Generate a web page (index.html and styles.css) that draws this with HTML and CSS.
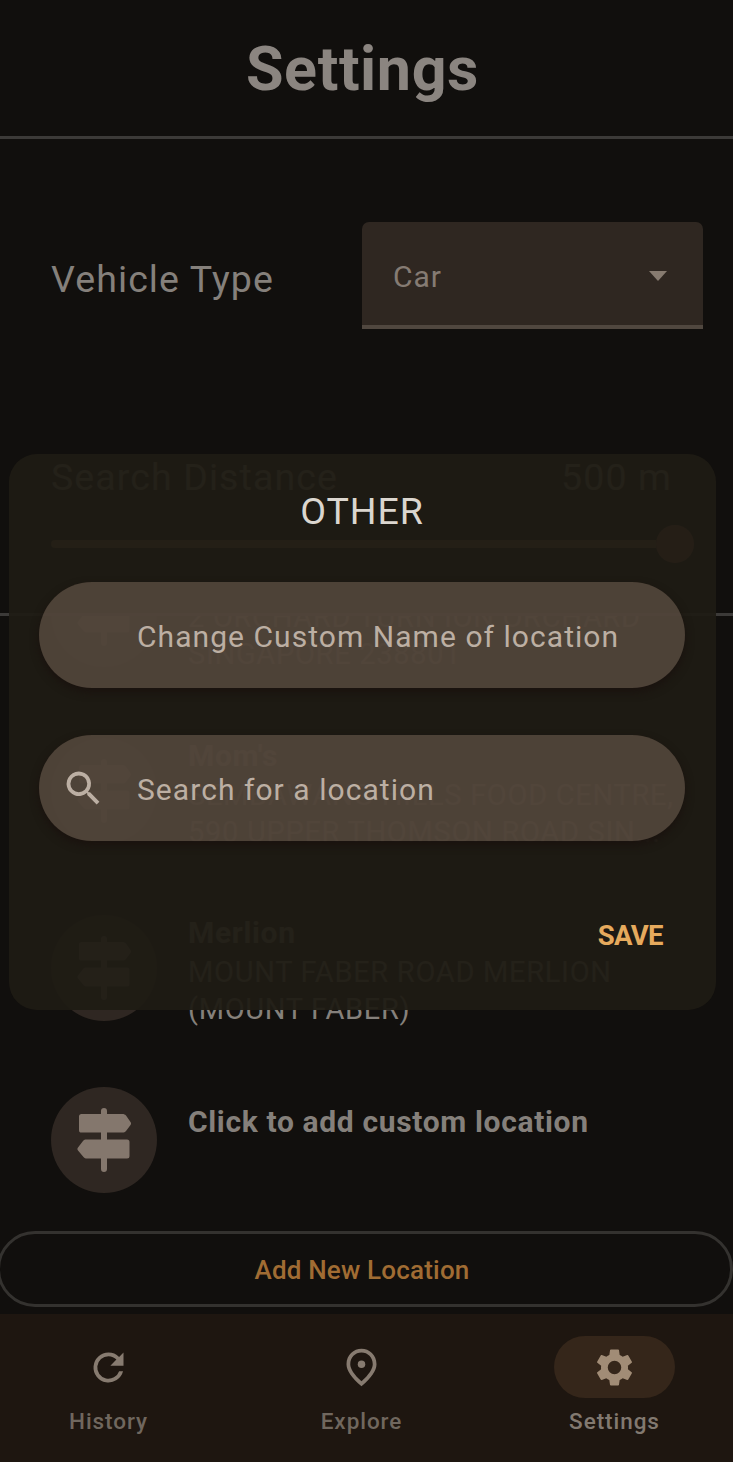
FILE: index.html
```html
<!DOCTYPE html>
<html lang="en">
<head>
<meta charset="utf-8">
<title>Settings</title>
<link rel="stylesheet" href="styles.css">
</head>
<body>
<svg class="defs" aria-hidden="true">
  <symbol id="signpost" viewBox="0 0 56 66">
    <path d="M25 4a3 3 0 0 1 6 0V7h15.500c1.500 0 2.500.5 3.500 1.500l4.500 6.500c.8 1 .8 2 0 3l-4.500 6c-1 1.200-2 1.600-3.500 1.600H31v6.900h20a2.500 2.500 0 0 1 2.500 2.500v14a2.500 2.500 0 0 1-2.500 2.500H31V62a3 3 0 0 1-6 0V51.500H11c-1.500 0-2.500-.5-3.500-1.500L2 43.500c-.8-1-.8-2 0-3l5-6.500c1-1.200 2-1.500 3.500-1.500H25v-6.900H5.500A2.500 2.500 0 0 1 3 23V9.500A2.500 2.500 0 0 1 5.500 7H25z"/>
  </symbol>
</svg>
<div class="screen">
  <header class="header"><h1 class="title">Settings</h1></header>
  <section class="preferences">
    <div class="vehicle">
      <span class="vehicle-label">Vehicle Type</span>
      <div class="select"><span class="select-value">Car</span><i class="caret"></i></div>
    </div>
    <div class="distance"><span class="distance-label">Search Distance</span><span>500 m</span></div>
    <div class="slider"><i class="track"></i><i class="knob"></i></div>
  </section>
  <main class="locations">
    <article class="location first">
      <div class="avatar"><svg><use href="#signpost"/></svg></div>
      <div class="details"><p>2 ORCHARD TURN ION ORCHARD</p><p>SINGAPORE 238801</p></div>
    </article>
    <article class="location">
      <div class="avatar"><svg><use href="#signpost"/></svg></div>
      <div class="details"><h2>Mom's</h2><p>SEMBAWANG HILLS FOOD CENTRE,</p><p>590 UPPER THOMSON ROAD SIN...</p></div>
    </article>
    <article class="location merlion">
      <div class="avatar"><svg><use href="#signpost"/></svg></div>
      <div class="details"><h2>Merlion</h2><p>MOUNT FABER ROAD MERLION</p><p>(MOUNT FABER)</p></div>
    </article>
    <article class="location last">
      <div class="avatar"><svg><use href="#signpost"/></svg></div>
      <div class="details"><h2>Click to add custom location</h2></div>
    </article>
  </main>
  <button class="add">Add New Location</button>
  <nav class="nav">
    <a class="tab"><span class="tab-icon"><svg viewBox="0 0 24 24"><path d="M17.650 6.350A7.950 7.950 0 0 0 12 4a8 8 0 1 0 7.750 10h-2.080A6 6 0 1 1 12 6c1.660 0 3.140.690 4.220 1.780L13 11h7V4z"/></svg></span>History</a>
    <a class="tab"><span class="tab-icon"><svg viewBox="0 0 24 24"><path fill-rule="evenodd" d="M12 2C7.800 2 4 5.220 4 10.200 4 13.520 6.670 17.450 12 22c5.330-4.550 8-8.480 8-11.800C20 5.220 16.200 2 12 2zm0 17.350C7.950 15.670 6 12.550 6 10.200 6 6.570 8.650 4 12 4s6 2.570 6 6.200c0 2.350-1.950 5.470-6 9.150z"/><circle cx="12" cy="10.200" r="2"/></svg></span>Explore</a>
    <a class="tab active"><span class="tab-icon"><svg viewBox="0 0 24 24"><path d="M19.140 12.940c.04-.3.060-.61.060-.94 0-.32-.02-.64-.07-.94l2.030-1.580a.49.490 0 0 0 .12-.61l-1.920-3.320a.488.488 0 0 0-.59-.22l-2.390.96c-.5-.38-1.030-.7-1.620-.94l-.36-2.540a.484.484 0 0 0-.48-.41h-3.840c-.24 0-.43.170-.47.410l-.36 2.540c-.59.240-1.130.570-1.620.940l-2.390-.96c-.22-.08-.47 0-.59.220L2.740 8.870c-.12.210-.08.470.12.610l2.030 1.580c-.05.300-.09.630-.09.940s.02.640.07.940l-2.030 1.580a.49.490 0 0 0-.12.610l1.920 3.320c.12.220.37.290.59.220l2.390-.96c.5.380 1.030.700 1.620.940l.36 2.540c.05.240.24.410.48.410h3.840c.24 0 .44-.17.470-.41l.36-2.540c.59-.24 1.130-.56 1.620-.94l2.390.96c.22.080.47 0 .59-.22l1.920-3.320c.12-.22.070-.47-.12-.61zM12 15.600A3.600 3.600 0 1 1 12 8.400a3.600 3.600 0 0 1 0 7.200z"/></svg></span>Settings</a>
  </nav>
  <div class="dialog" role="dialog">
    <h2 class="dialog-title">OTHER</h2>
    <div class="field"><span>Change Custom Name of location</span></div>
    <div class="field"><svg class="search" viewBox="0 0 24 24"><path d="M15.500 14h-.79l-.28-.27A6.500 6.500 0 1 0 13.730 14.430l.27.280v.79l5 4.990L20.490 19zM9.500 14a4.500 4.500 0 1 1 0-9 4.500 4.500 0 0 1 0 9z"/></svg><span>Search for a location</span></div>
    <button class="save">SAVE</button>
  </div>
</div>
</body>
</html>
```
FILE: styles.css
```css
* { box-sizing: border-box; }
body { margin: 0; background: #110f0d; font-family: Roboto, "Liberation Sans", sans-serif; color: #85807b; }
h1, h2, p { margin: 0; }
button { font: inherit; background: none; border: 0; padding: 0; }
svg { display: block; fill: currentColor; }
.defs { position: absolute; width: 0; height: 0; }
.screen { position: relative; width: 733px; height: 1462px; overflow: hidden; display: flex; flex-direction: column; }

.header { height: 139px; flex: none; padding: 2px 8px 0 0; border-bottom: 3px solid #3c3a38; display: flex; align-items: center; justify-content: center; }
.title { font-size: 61px; line-height: 70px; font-weight: 700; letter-spacing: .6px; color: #8b8580; }

.preferences { height: 477px; flex: none; padding: 83px 30px 0 51px; border-bottom: 3px solid #3c3a38; }
.vehicle { height: 107px; display: flex; justify-content: space-between; align-items: center; }
.vehicle-label { font-size: 37.5px; letter-spacing: 1.1px; padding-top: 7px; }
.select { width: 341px; height: 107px; padding: 4px 36px 0 31px; background: #2f2721; border-bottom: 4px solid #50473f; border-radius: 7px 7px 0 0; display: flex; align-items: center; justify-content: space-between; font-size: 30px; letter-spacing: .9px; color: #857b73; }
.select-value { padding-top: 2px; }
.caret { border: 9.500px solid transparent; border-top: 10px solid #877b70; border-bottom: 0; }
.distance { height: 44px; margin-top: 126px; padding-right: 31px; display: flex; justify-content: space-between; font-size: 37.5px; line-height: 44px; letter-spacing: 1.1px; }
.slider { height: 38px; margin-top: 26px; display: flex; align-items: center; }
.track { height: 8px; width: 605px; background: #805e3a; border-radius: 4px 0 0 4px; }
.knob { width: 38px; height: 38px; border-radius: 50%; background: #a05848; }

.locations { height: 615px; flex: none; overflow: hidden; padding-left: 51px; }
.location { height: 177px; display: flex; gap: 31px; }
.location.first { height: 122px; }
.location.merlion { height: 172px; }
.avatar { width: 106px; height: 106px; flex: none; background: #2f2722; border-radius: 50%; display: flex; align-items: center; justify-content: center; color: #84776d; }
.avatar svg { width: 56px; height: 66px; }
.first .avatar { margin-top: -55px; }
.first .details { margin-top: -17px; }
.last .details { padding-top: 17px; }
.details { white-space: nowrap; }
.location h2 { font-size: 30px; line-height: 36px; font-weight: 700; letter-spacing: .65px; }
.location p { font-size: 29px; line-height: 37px; letter-spacing: .7px; }
.location h2 + p { margin-top: 3px; }

.add { width: 736px; height: 76px; margin-left: -3px; flex: none; border: 3px solid #34322f; border-radius: 38px; font-size: 26px; font-weight: 500; letter-spacing: .19px; color: #a06c33; padding-right: 6px; padding-top: 1px; }
.nav { margin-top: 7px; flex: 1; background: #1e1610; display: flex; justify-content: space-between; padding: 22px 58px 0 48px; }
.tab { display: flex; flex-direction: column; align-items: center; gap: 10px; font-size: 22.500px; line-height: 27px; font-weight: 500; letter-spacing: .94px; color: #70675e; width: 121px; }
.tab-icon { width: 121px; height: 62px; border-radius: 31px; display: flex; align-items: center; justify-content: center; color: #877b70; }
.tab svg { width: 45px; height: 45px; }
.active { color: #827970; }
.active .tab-icon { background: #35261a; color: #a18c76; }

.dialog { position: absolute; left: 9px; top: 454px; width: 707px; height: 556px; padding: 36px 31px 0 30px; border-radius: 28px; background: rgba(31, 27, 20, .95); display: flex; flex-direction: column; }
.dialog-title { height: 42px; text-align: center; font-size: 37.5px; line-height: 42px; font-weight: 400; letter-spacing: .9px; color: #dbd6cf; }
.field { height: 106px; margin-top: 50px; padding: 3px 0 0 98px; border-radius: 53px; background: rgba(126, 106, 91, .5); box-shadow: 0 4px 8px #1a120e; display: flex; align-items: center; font-size: 30px; letter-spacing: 1.05px; color: #bcafa3; }
.field + .field { margin-top: 47px; padding-left: 22px; gap: 31px; }
.search { width: 45px; height: 45px; margin-top: -3px; }
.save { align-self: flex-end; margin: 79px 22px 0 0; font-size: 27.5px; line-height: 32px; font-weight: 700; letter-spacing: -.6px; color: #e6aa5d; }
```
